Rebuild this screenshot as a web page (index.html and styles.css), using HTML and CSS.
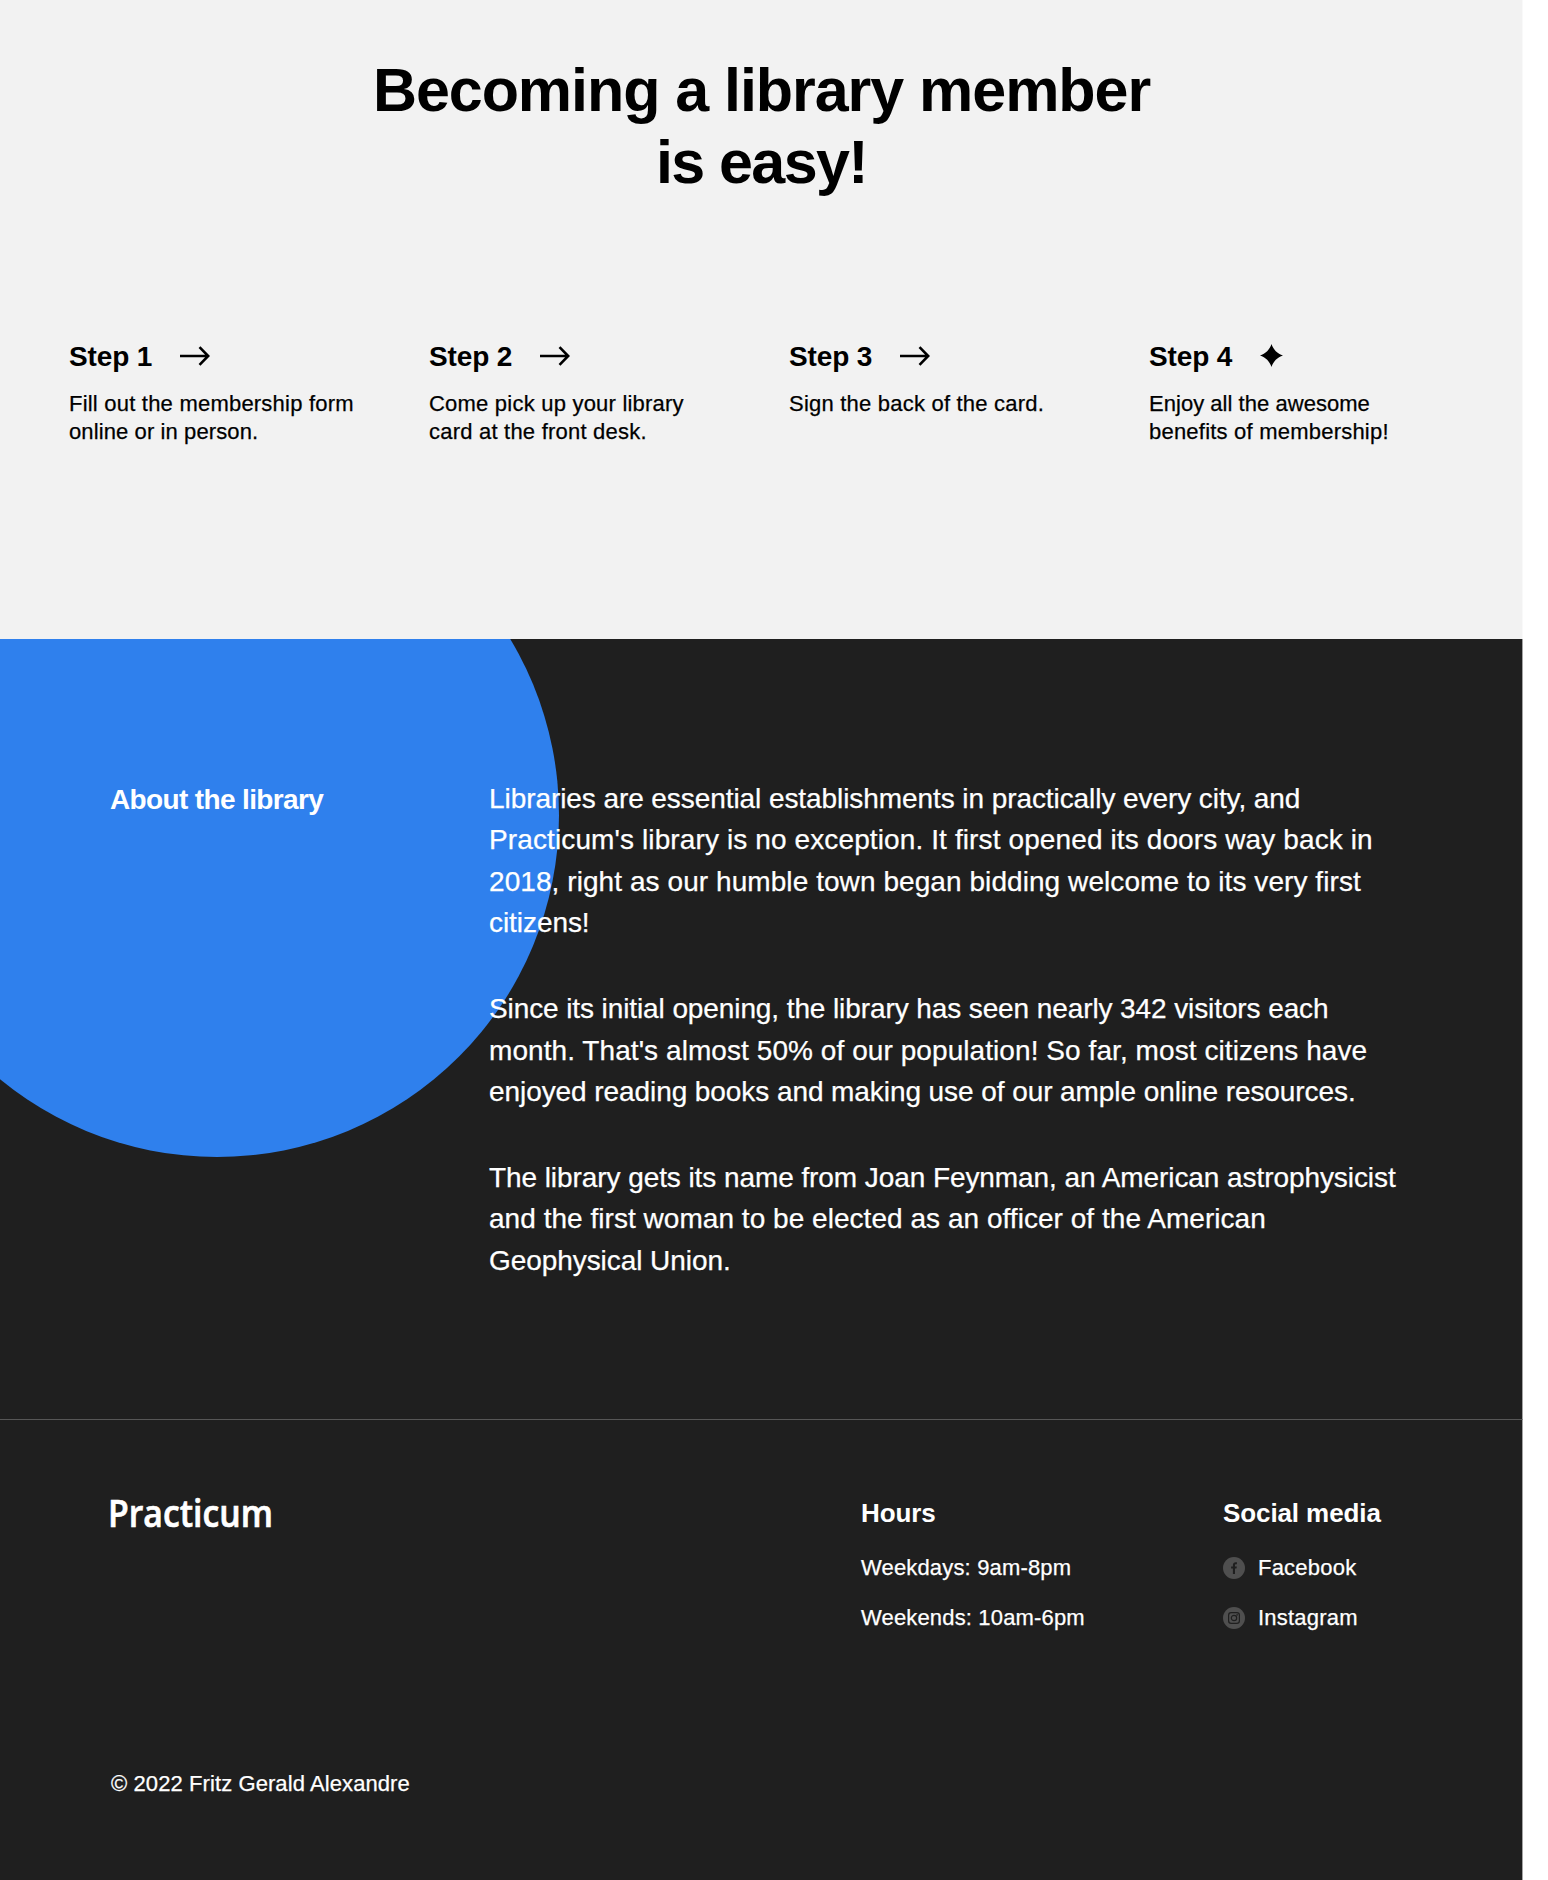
FILE: index.html
```html
<!DOCTYPE html>
<html lang="en">
<head>
<meta charset="utf-8">
<title>Practicum library</title>
<link rel="stylesheet" href="styles.css">
</head>
<body>
<div class="page">
  <section class="join">
    <h1 class="join__title">Becoming a library member<br><span class="join__last">is easy!</span></h1>
    <ul class="steps">
      <li class="step">
        <h2 class="step__head"><span class="step__name">Step 1</span><svg class="step__arrow" viewBox="0 0 30 20"><path d="M0 10H28M19.5 1.2L28.2 10L19.5 18.8"/></svg></h2>
        <p class="step__text">Fill out the membership form<br><span class="ls-10">online or in person.</span></p>
      </li>
      <li class="step">
        <h2 class="step__head"><span class="step__name">Step 2</span><svg class="step__arrow" viewBox="0 0 30 20"><path d="M0 10H28M19.5 1.2L28.2 10L19.5 18.8"/></svg></h2>
        <p class="step__text">Come pick up your library<br>card at the front desk.</p>
      </li>
      <li class="step">
        <h2 class="step__head"><span class="step__name">Step 3</span><svg class="step__arrow" viewBox="0 0 30 20"><path d="M0 10H28M19.5 1.2L28.2 10L19.5 18.8"/></svg></h2>
        <p class="step__text">Sign the back of the card.</p>
      </li>
      <li class="step">
        <h2 class="step__head"><span class="step__name">Step 4</span><svg class="step__star" viewBox="0 0 24 24"><path d="M12 0C13.7 5.7 18.3 10.3 24 12C18.3 13.7 13.7 18.3 12 24C10.3 18.3 5.7 13.7 0 12C5.7 10.3 10.3 5.7 12 0Z"/></svg></h2>
        <p class="step__text"><span class="ls-3">Enjoy all the awesome</span><br>benefits of membership!</p>
      </li>
    </ul>
  </section>

  <section class="about">
    <div class="about__circle"></div>
    <h2 class="about__title">About the library</h2>
    <div class="about__body">
      <p><span class="ls-m7">Libraries are essential establishments in practically every city, and</span><br><span class="ls-11">Practicum's library is no exception. It first opened its doors way back in</span><br><span class="ls-7">2018, right as our humble town began bidding welcome to its very first</span><br><span class="ls-m6">citizens!</span></p>
      <p><span class="ls-m10">Since its initial opening, the library has seen nearly 342 visitors each</span><br><span class="ls-7">month. That's almost 50% of our population! So far, most citizens have</span><br><span class="ls-m7">enjoyed reading books and making use of our ample online resources.</span></p>
      <p><span class="ls-m7">The library gets its name from Joan Feynman, an American astrophysicist</span><br><span class="ls-3">and the first woman to be elected as an officer of the American</span><br><span class="ls-m6">Geophysical Union.</span></p>
    </div>
  </section>

  <footer class="footer">
    <div class="footer__top">
      <svg class="logo" viewBox="0 0 172 64"><text x="0" y="46" textLength="165" lengthAdjust="spacingAndGlyphs">Practicum</text></svg>
      <div class="footer__col footer__col--hours">
        <h3 class="footer__title">Hours</h3>
        <p class="footer__line">Weekdays: 9am-8pm</p>
        <p class="footer__line">Weekends: 10am-6pm</p>
      </div>
      <div class="footer__col">
        <h3 class="footer__title">Social media</h3>
        <p class="footer__line footer__line--social"><svg class="social" viewBox="0 0 22 22"><circle cx="11" cy="11" r="11"/><path class="social__fill" d="M9.9 17V11.6H8.1V9.4H9.9V8.1C9.9 6.2 11 5.2 12.7 5.2C13.4 5.2 13.9 5.3 13.9 5.3V7.3H13C12.2 7.3 12 7.8 12 8.3V9.4H13.8L13.5 11.6H12V17Z"/></svg>Facebook</p>
        <p class="footer__line footer__line--social"><svg class="social" viewBox="0 0 22 22"><circle cx="11" cy="11" r="11"/><rect class="social__line" x="5.6" y="5.6" width="10.8" height="10.8" rx="2.6"/><circle class="social__line" cx="11" cy="11" r="2.7"/><circle class="social__fill" cx="14.1" cy="7.9" r=".8"/></svg>Instagram</p>
      </div>
    </div>
    <p class="copyright">© 2022 Fritz Gerald Alexandre</p>
  </footer>
</div>
</body>
</html>
```
FILE: styles.css
```css
* { box-sizing: border-box; }

body {
  margin: 0;
  background: #fff;
  font-family: "Liberation Sans", Arial, sans-serif;
  color: #000;
}

h1, h2, h3, p, ul { margin: 0; padding: 0; }
ul { list-style: none; }
p { -webkit-text-stroke: .25px currentColor; }

.page {
  display: flex;
  flex-direction: column;
  width: 1523px;
  height: 1880px;
}

/* Joining steps */
.join {
  height: 639px;
  padding: 54px 0 0;
  background: #f2f2f2;
  border-right: 1px solid #f9f9f9;
}

.join__title {
  padding-left: 1px;
  font-size: 61px;
  line-height: 72px;
  font-weight: 700;
  letter-spacing: -1.05px;
  text-align: center;
}

.join__last { letter-spacing: -1.6px; }

.steps {
  display: grid;
  grid-template-columns: repeat(4, 360px);
  margin-top: 141px;
  padding-left: 69px;
}

.step__head {
  display: flex;
  height: 34px;
  font-size: 28px;
  line-height: 36px;
  letter-spacing: -.12px;
}

.step__name { width: 111px; }

.step__arrow {
  width: 30px;
  height: 20px;
  margin-top: 6.5px;
  fill: none;
  stroke: #000;
  stroke-width: 2.6;
}

.step__star { width: 23px; height: 23px; margin-top: 5px; }

.step__text {
  margin-top: 17px;
  font-size: 22px;
  line-height: 28px;
  letter-spacing: .215px;
}

/* About */
.about {
  position: relative;
  display: flex;
  height: 780px;
  padding: 139px 0 0 110px;
  overflow: hidden;
  background: #1f1f1f;
  border-right: 1px solid #a3a3a3;
  color: #fff;
}

.about__circle {
  position: absolute;
  left: -125px;
  top: -166px;
  width: 684px;
  height: 684px;
  border-radius: 50%;
  background: #2f80ed;
}

.about__title {
  position: relative;
  width: 379px;
  padding-top: 1px;
  font-size: 28px;
  line-height: 41.4px;
  letter-spacing: -.64px;
}

.about__body {
  position: relative;
  display: flex;
  flex-direction: column;
  gap: 44.6px;
  font-size: 28px;
  line-height: 41.4px;
  white-space: nowrap;
}

/* Per-line tracking */
.ls-m10 { letter-spacing: -.1px; }
.ls-m7 { letter-spacing: -.075px; }
.ls-m6 { letter-spacing: -.065px; }
.ls-3 { letter-spacing: .035px; }
.ls-7 { letter-spacing: .07px; }
.ls-10 { letter-spacing: .105px; }
.ls-11 { letter-spacing: .115px; }

/* Footer */
.footer {
  flex: 1;
  padding: 78px 0 0 110px;
  background: #1f1f1f;
  border-top: 1px solid #565656;
  border-right: 1px solid #a3a3a3;
  color: #fff;
}

.footer__top { display: flex; }

.logo {
  width: 172px;
  height: 64px;
  margin: -17px 581px 0 -2px;
  overflow: visible;
  fill: #fff;
  stroke: #fff;
  stroke-width: .7px;
  font-family: "Open Sans", "Noto Sans", sans-serif;
  font-size: 38px;
  font-weight: 600;
}

.footer__col--hours { width: 362px; }

.footer__title {
  margin-bottom: 26px;
  font-size: 26px;
  line-height: 31px;
  letter-spacing: -.1px;
}

.footer__line {
  font-size: 22px;
  line-height: 26px;
  letter-spacing: .16px;
}

.footer__line + .footer__line { margin-top: 24px; }

.footer__line--social {
  display: flex;
  align-items: center;
  gap: 13px;
  letter-spacing: .22px;
}

.social { width: 22px; height: 22px; margin-top: -1px; fill: #4f4f4f; }
.social__fill { fill: #1f1f1f; }
.social__line { fill: none; stroke: #1f1f1f; stroke-width: 1.2; }

.copyright {
  margin: 140px 0 0 1px;
  font-size: 22px;
  line-height: 26px;
  letter-spacing: .09px;
}
```
